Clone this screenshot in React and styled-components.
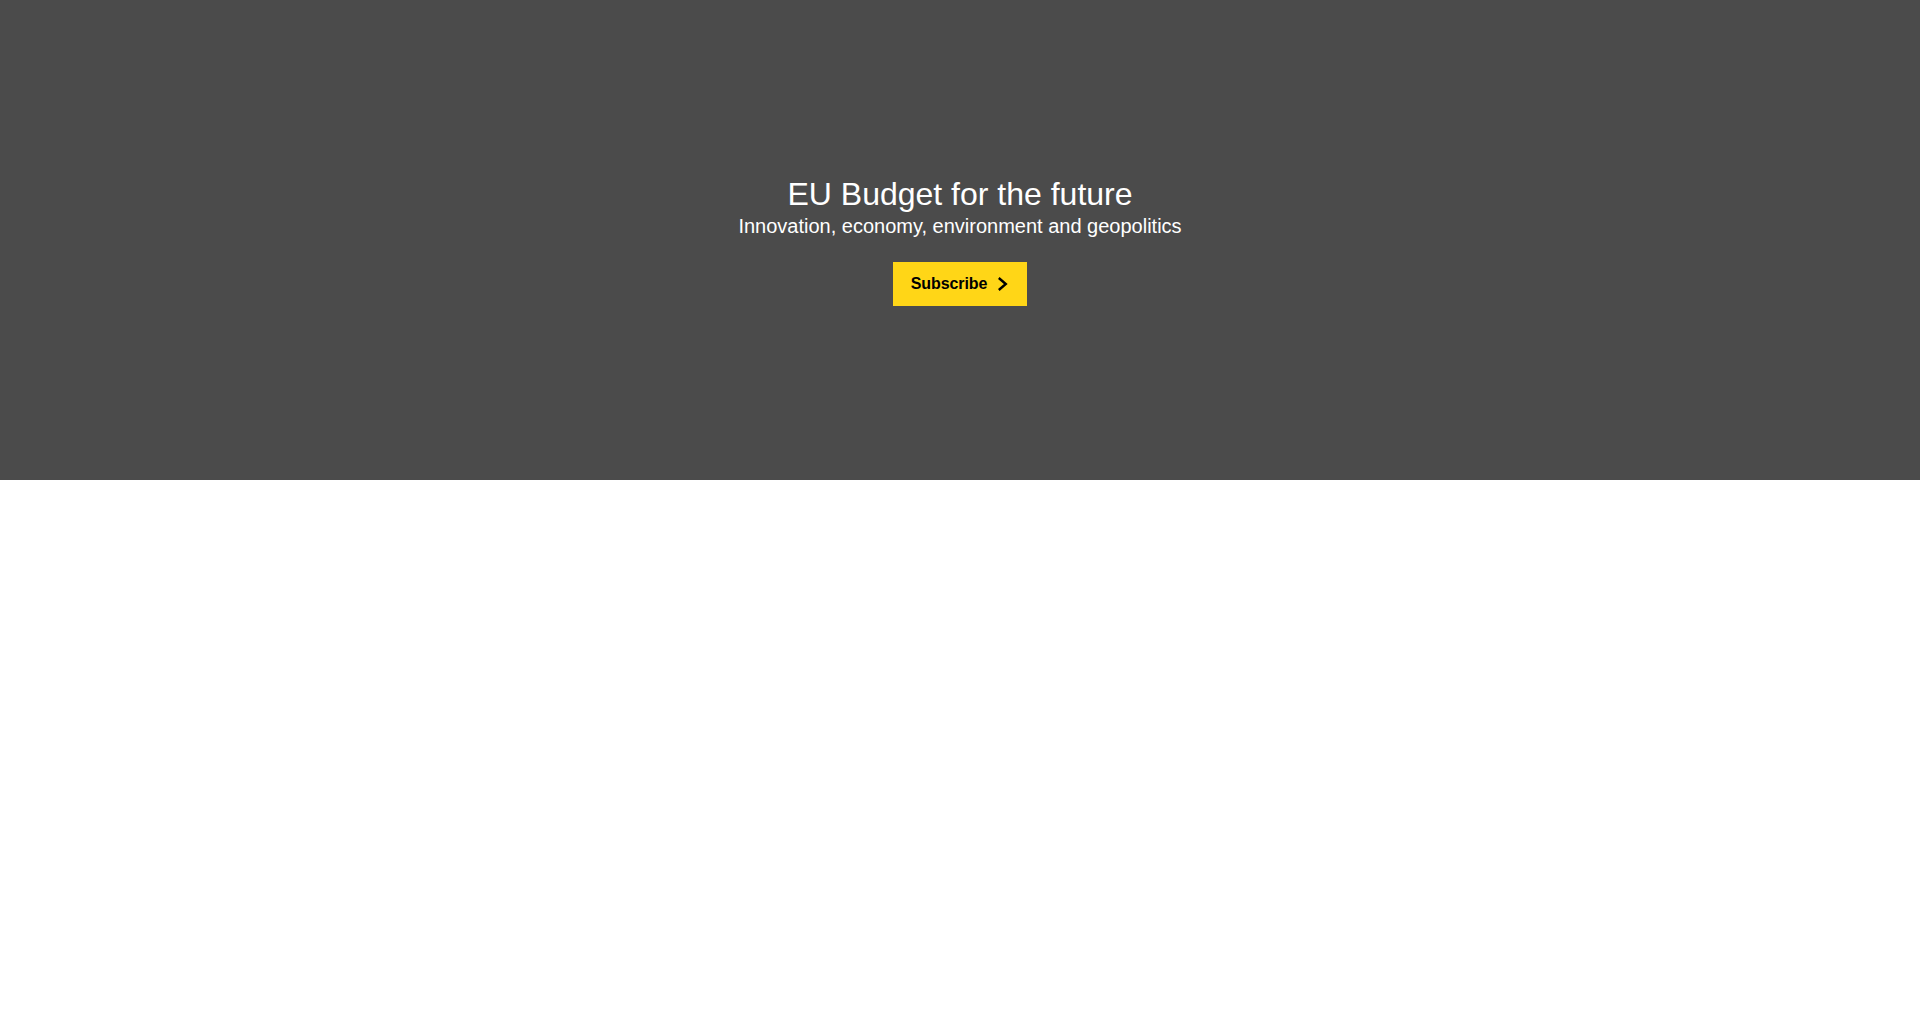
import React from "react";
import styled, { createGlobalStyle } from "styled-components";

const Global = createGlobalStyle`
  html, body { margin: 0; padding: 0; background: #ffffff; }
  body { font-family: Arial, "Liberation Sans", Helvetica, sans-serif; }
  * { box-sizing: border-box; }
`;

const Hero = styled.section`
  height: 480px;
  padding-top: 1px;
  background: #4b4b4b;
  display: flex;
  flex-direction: column;
  align-items: center;
  justify-content: center;
  color: #ffffff;
  text-align: center;
`;

const Title = styled.h1`
  margin: 0;
  font-size: 32px;
  line-height: 36px;
  font-weight: 400;
`;

const Subtitle = styled.p`
  margin: 2px 0 0;
  font-size: 20px;
  line-height: 24px;
  font-weight: 400;
`;

const Button = styled.a`
  margin-top: 24px;
  height: 44px;
  display: inline-flex;
  align-items: center;
  gap: 10px;
  padding: 0 19px 0 18px;
  background: #ffd617;
  color: #000000;
  font-size: 16px;
  font-weight: 700;
  letter-spacing: -0.1px;
  text-decoration: none;
  cursor: pointer;
`;

const Chevron = () => (
  <svg width="11" height="14" viewBox="0 0 11 14" aria-hidden="true">
    <path d="M1.8 1 L8.8 7 L1.8 13" fill="none" stroke="#000" strokeWidth="2.4" strokeLinecap="butt" strokeLinejoin="miter" />
  </svg>
);

export default function App() {
  return (
    <>
      <Global />
      <Hero>
        <Title>EU Budget for the future</Title>
        <Subtitle>Innovation, economy, environment and geopolitics</Subtitle>
        <Button>
          Subscribe
          <Chevron />
        </Button>
      </Hero>
    </>
  );
}
